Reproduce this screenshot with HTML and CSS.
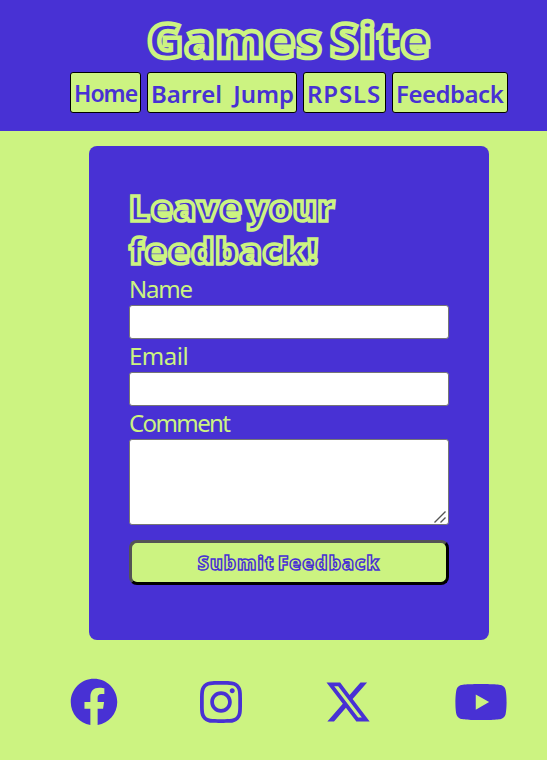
FILE: index.html
```html
<!DOCTYPE html>
<html lang="en">
<head>
<meta charset="utf-8">
<title>Games Site</title>
<link rel="stylesheet" href="styles.css">
</head>
<body>
<header class="header">
  <h1 class="title">Games Site</h1>
  <nav class="nav">
    <a class="link home">Home</a>
    <a class="link barrel">Barrel Jump</a>
    <a class="link rpsls">RPSLS</a>
    <a class="link feedback">Feedback</a>
  </nav>
</header>
<main>
  <form class="card">
    <h2 class="heading"><span class="first">Leave your</span><br><span class="second">feedback!</span></h2>
    <label class="label name" for="name">Name</label>
    <input class="field" id="name" type="text">
    <label class="label email" for="email">Email</label>
    <input class="field" id="email" type="email">
    <label class="label comment" for="comment">Comment</label>
    <div class="area-wrap">
      <textarea class="field area" id="comment"></textarea>
      <svg class="grip" viewBox="0 0 12 12" width="12" height="12"><path d="M0.500 11.500L11.500 0.500M6.500 11.500L11.500 6.500"/></svg>
    </div>
    <button class="submit" type="button">Submit Feedback</button>
  </form>
</main>
<footer class="social">
  <svg class="icon" viewBox="0 0 512 512" width="48"><path d="M504 256C504 119 393 8 256 8S8 119 8 256c0 123.78 90.69 226.38 209.25 245V327.69h-63V256h63v-54.64c0-62.15 37-96.48 93.67-96.48 27.14 0 55.52 4.84 55.52 4.84v61h-31.28c-30.8 0-40.41 19.12-40.41 38.73V256h68.78l-11 71.69h-57.78V501C413.31 482.38 504 379.78 504 256z"/></svg>
  <svg class="icon" viewBox="0 0 448 512" width="42"><path d="M224.1 141c-63.6 0-114.9 51.3-114.9 114.9s51.3 114.9 114.9 114.9S339 319.500 339 255.900 287.700 141 224.100 141zm0 189.600c-41.100 0-74.700-33.500-74.700-74.700s33.500-74.700 74.700-74.700 74.700 33.500 74.700 74.700-33.600 74.700-74.700 74.700zm146.400-194.300c0 14.900-12 26.800-26.800 26.800-14.900 0-26.800-12-26.800-26.800s12-26.800 26.800-26.800 26.800 12 26.800 26.800zm76.100 27.200c-1.700-35.900-9.900-67.700-36.200-93.900-26.200-26.200-58-34.400-93.900-36.200-37-2.100-147.900-2.100-184.900 0-35.800 1.700-67.600 9.900-93.900 36.100s-34.400 58-36.200 93.900c-2.100 37-2.100 147.900 0 184.900 1.700 35.900 9.900 67.700 36.200 93.900s58 34.400 93.900 36.200c37 2.100 147.900 2.100 184.900 0 35.900-1.700 67.700-9.900 93.900-36.200 26.200-26.200 34.400-58 36.200-93.900 2.100-37 2.100-147.800 0-184.800zM398.800 388c-7.800 19.600-22.900 34.700-42.600 42.600-29.500 11.700-99.500 9-132.100 9s-102.700 2.600-132.100-9c-19.600-7.800-34.700-22.900-42.600-42.600-11.700-29.500-9-99.500-9-132.100s-2.600-102.700 9-132.100c7.800-19.600 22.900-34.700 42.600-42.600 29.500-11.700 99.500-9 132.100-9s102.700-2.600 132.100 9c19.600 7.800 34.700 22.900 42.600 42.600 11.700 29.500 9 99.500 9 132.100s2.700 102.700-9 132.100z"/></svg>
  <svg class="icon" viewBox="0 0 512 512" width="48"><path d="M389.2 48h70.6L305.6 224.2 487 464H345L233.700 318.600 106.500 464H35.800L200.700 275.500 26.800 48H172.400L272.900 180.900 389.200 48zM364.400 421.800h39.100L151.100 88h-42L364.400 421.800z"/></svg>
  <svg class="icon" viewBox="0 0 576 512" width="54"><path d="M549.655 124.083c-6.281-23.650-24.787-42.276-48.284-48.597C458.781 64 288 64 288 64S117.220 64 74.629 75.486c-23.497 6.322-42.003 24.947-48.284 48.597-11.412 42.867-11.412 132.305-11.412 132.305s0 89.438 11.412 132.305c6.281 23.650 24.787 41.500 48.284 47.821C117.220 448 288 448 288 448s170.780 0 213.371-11.486c23.497-6.321 42.003-24.171 48.284-47.821 11.412-42.867 11.412-132.305 11.412-132.305s0-89.438-11.412-132.305zm-317.510 213.508V175.185l142.739 81.205-142.739 81.201z"/></svg>
</footer>
</body>
</html>
```
FILE: styles.css
```css
* { box-sizing: border-box; }

body {
  margin: 0;
  background: #ccf381;
  color: #4831d4;
  font-family: "Comic Sans MS", "Noto Sans", sans-serif;
  font-size: 24px;
}

.header {
  height: 131px;
  padding: 12px 38px 0 70px;
  background: #4831d4;
}

.title, .heading {
  margin: 0;
  font-family: "Open Sans", sans-serif;
  font-weight: 800;
  color: #4831d4;
  white-space: nowrap;
}

.title {
  height: 60px;
  font-size: 48px;
  line-height: 56px;
  text-align: center;
  letter-spacing: 1.6px;
  word-spacing: -7px;
  -webkit-text-stroke: 4.5px #ccf381;
}

.nav { display: flex; gap: 6px; }

.link {
  height: 41px;
  padding-left: 3px;
  border: 1px solid #000;
  border-radius: 3px;
  background: #ccf381;
  font-weight: 600;
  line-height: 41px;
  white-space: nowrap;
}

.home { width: 71px; font-size: 23px; letter-spacing: -1px; }
.barrel { width: 150px; word-spacing: 5px; }
.rpsls { width: 83px; letter-spacing: 0.9px; }
.feedback { width: 116px; letter-spacing: -0.5px; }

.card {
  width: 400px;
  height: 494px;
  margin: 15px 0 0 89px;
  padding: 40px;
  border-radius: 8px;
  background: #4831d4;
}

.heading {
  height: 86px;
  font-size: 36px;
  line-height: 43px;
  -webkit-text-stroke: 3.5px #ccf381;
}

.first { letter-spacing: 0.7px; word-spacing: -6px; }
.second { letter-spacing: 0.9px; }

.label {
  display: block;
  height: 33px;
  line-height: 33px;
  color: #ccf381;
}

.name { letter-spacing: -1.2px; }
.email { letter-spacing: -0.5px; }
.comment { letter-spacing: -1.6px; }

.field {
  display: block;
  width: 320px;
  height: 34px;
  border: 1px solid #767676;
  border-radius: 3px;
  background: #fff;
}

.area-wrap { position: relative; }

.area { height: 86px; resize: none; }

.grip {
  position: absolute;
  right: 3px;
  bottom: 2px;
  fill: none;
  stroke: #555;
  stroke-width: 1.4;
}

.submit {
  display: block;
  width: 320px;
  height: 45px;
  margin-top: 15px;
  padding: 0;
  border: 3px outset #000;
  border-radius: 8px;
  background: #ccf381;
  color: #ccf381;
  font: 800 19px "Open Sans", sans-serif;
  letter-spacing: 1.2px;
  word-spacing: -3px;
  -webkit-text-stroke: 1.5px #4831d4;
}

.social {
  display: flex;
  justify-content: space-between;
  margin: 38px 38.5px 0 70px;
}

.icon { height: 48px; fill: #4831d4; }
```
